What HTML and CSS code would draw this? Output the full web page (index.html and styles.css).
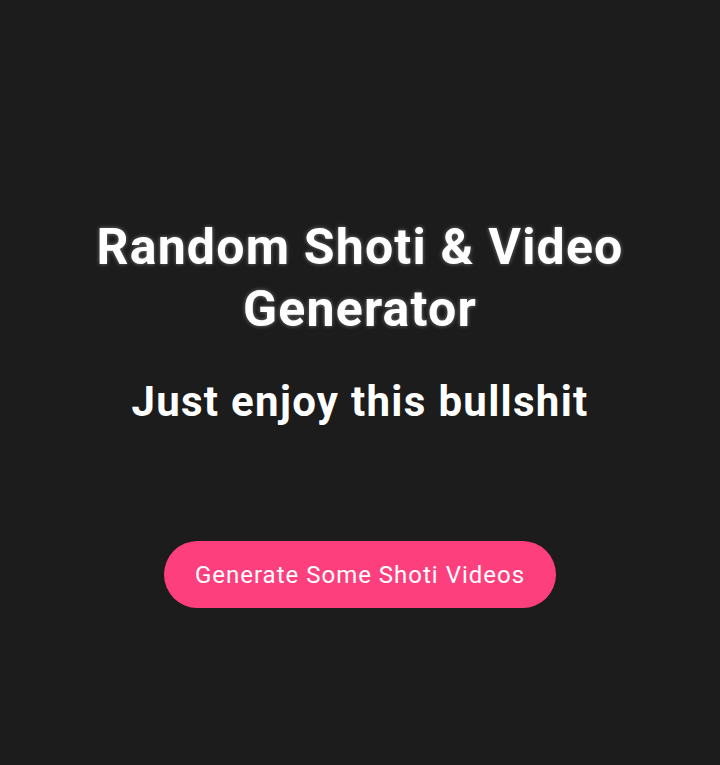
FILE: index.html
```html
<!DOCTYPE html>
<html lang="en">
<head>
<meta charset="utf-8">
<title>Random Shoti & Video Generator</title>
<link rel="stylesheet" href="styles.css">
</head>
<body>
<main class="page">
  <h1 class="title">Random Shoti &amp; Video Generator</h1>
  <h2 class="subtitle">Just enjoy this bullshit</h2>
  <button class="cta" type="button">Generate Some Shoti Videos</button>
</main>
</body>
</html>
```
FILE: styles.css
```css
html, body {
  margin: 0;
  padding: 0;
  background: #1c1c1c;
  height: 100%;
}
.page {
  min-height: 765px;
  box-sizing: border-box;
  display: flex;
  flex-direction: column;
  align-items: center;
  padding-top: 216px;
  font-family: Roboto, "Noto Sans", sans-serif;
  color: #ffffff;
  text-align: center;
}
.title {
  margin: 0;
  width: 600px;
  font-size: 50px;
  line-height: 62px;
  font-weight: 700;
  letter-spacing: 1.2px;
  text-shadow: 0 0 4px rgba(255,255,255,0.4);
}
.subtitle {
  margin: 37px 0 0;
  font-size: 42px;
  line-height: 50px;
  font-weight: 700;
  letter-spacing: 1.3px;
}
.cta {
  margin-top: 114px;
  width: 392px;
  height: 67px;
  border: none;
  border-radius: 34px;
  background: #fe3f7e;
  color: #ffffff;
  font-family: Roboto, "Noto Sans", sans-serif;
  font-size: 24px;
  font-weight: 400;
  letter-spacing: 1px;
  padding: 0;
}
```
